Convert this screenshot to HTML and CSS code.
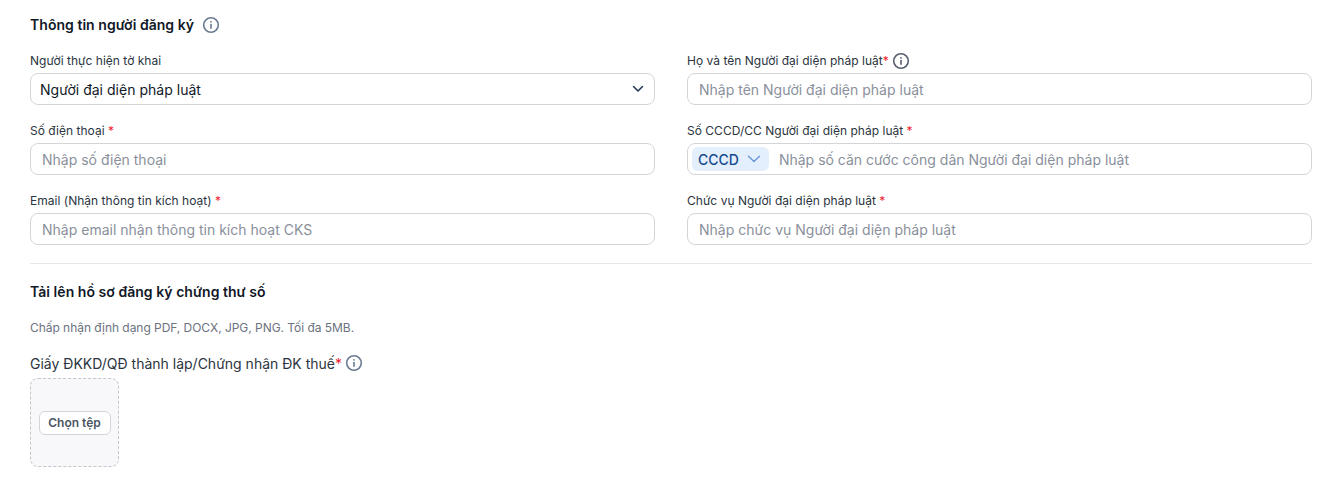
FILE: index.html
```html
<!DOCTYPE html>
<html lang="vi">
<head>
<meta charset="utf-8">
<title>Thông tin người đăng ký</title>
<link rel="stylesheet" href="styles.css">
</head>
<body>
<svg class="sprite" width="0" height="0" aria-hidden="true">
  <symbol id="info" viewBox="0 0 18 18">
    <circle cx="9" cy="9" r="7.3" fill="none" stroke="currentColor" stroke-width="1.6"/>
    <path d="M9 8.500v3.700" fill="none" stroke="currentColor" stroke-width="1.6" stroke-linecap="round"/>
    <circle cx="9" cy="5.800" r=".9" fill="currentColor"/>
  </symbol>
</svg>
<main class="page">
  <div class="section-title">
    <h2 class="heading">Thông tin người đăng ký</h2>
    <svg class="info info-title"><use href="#info"/></svg>
  </div>
  <div class="grid">
    <div class="field">
      <div class="label">Người thực hiện tờ khai</div>
      <div class="control select">
        <span class="value">Người đại diện pháp luật</span>
        <svg class="chevron" viewBox="0 0 12 8"><path d="M1.500 1.500L6 6l4.500-4.500" fill="none" stroke="currentColor" stroke-width="1.500" stroke-linecap="round" stroke-linejoin="round"/></svg>
      </div>
    </div>
    <div class="field">
      <div class="label">Họ và tên Người đại diện pháp luật<span class="req">*</span><svg class="info info-label"><use href="#info"/></svg></div>
      <div class="control"><span class="placeholder">Nhập tên Người đại diện pháp luật</span></div>
    </div>
    <div class="field">
      <div class="label">Số điện thoại <span class="req">*</span></div>
      <div class="control"><span class="placeholder">Nhập số điện thoại</span></div>
    </div>
    <div class="field">
      <div class="label">Số CCCD/CC Người đại diện pháp luật <span class="req">*</span></div>
      <div class="control control-tag">
        <span class="tag">CCCD<svg class="tag-chevron" viewBox="0 0 14 8"><path d="M1.500 1.200L7 6.500l5.500-5.300" fill="none" stroke="currentColor" stroke-width="1.500" stroke-linecap="round" stroke-linejoin="round"/></svg></span>
        <span class="placeholder">Nhập số căn cước công dân Người đại diện pháp luật</span>
      </div>
    </div>
    <div class="field">
      <div class="label">Email (Nhận thông tin kích hoạt) <span class="req">*</span></div>
      <div class="control"><span class="placeholder">Nhập email nhận thông tin kích hoạt CKS</span></div>
    </div>
    <div class="field">
      <div class="label">Chức vụ Người đại diện pháp luật <span class="req">*</span></div>
      <div class="control"><span class="placeholder">Nhập chức vụ Người đại diện pháp luật</span></div>
    </div>
  </div>
  <hr class="divider">
  <h2 class="heading upload-title">Tải lên hồ sơ đăng ký chứng thư số</h2>
  <p class="hint">Chấp nhận định dạng PDF, DOCX, JPG, PNG. Tối đa 5MB.</p>
  <div class="upload-label">Giấy ĐKKD/QĐ thành lập/Chứng nhận ĐK thuế<span class="req">*</span><svg class="info info-upload"><use href="#info"/></svg></div>
  <div class="dropzone"><button class="file-btn" type="button">Chọn tệp</button></div>
</main>
</body>
</html>
```

FILE: styles.css
```css
* { box-sizing: border-box; }
html, body { margin: 0; background: #fff; }
body { font-family: Inter, "Liberation Sans", sans-serif; color: #1f2937; }
.sprite { position: absolute; }
.page { padding: 15px 15px 0 30px; }
.section-title { display: flex; align-items: center; height: 20px; margin-bottom: 16px; }
.heading { margin: 0; font-size: 14px; line-height: 20px; font-weight: 600; letter-spacing: .04px; color: #111827; }
.info { color: #6b7c93; flex: none; }
.info-title { width: 18px; height: 18px; margin-left: 8px; }
.grid { display: grid; grid-template-columns: 625px 625px; column-gap: 32px; row-gap: 16px; }
.label { display: flex; align-items: center; height: 20px; margin-bottom: 2px; font-size: 12px; line-height: 20px; letter-spacing: .02px; color: #2b3440; white-space: pre-wrap; }
.req { color: #ef1c2e; }
.info-label { width: 18px; height: 18px; margin-left: 3px; color: #566070; }
.control { display: flex; align-items: center; height: 32px; padding: 0 11px; border: 1px solid #d4d5db; border-radius: 8px; background: #fff; font-size: 14px; }
.select { justify-content: space-between; padding: 0 10px 0 9px; }
.value { color: #111827; font-size: 14px; letter-spacing: .02px; }
.chevron { width: 12px; height: 8px; color: #1f3550; }
.placeholder { color: #8a909b; letter-spacing: .005px; }
.control-tag { padding: 0 4px; }
.tag { display: inline-flex; align-items: center; height: 24px; padding: 0 8px 0 6px; border-radius: 6px; background: #e4effd; color: #17498f; font-weight: 500; margin-right: 10px; }
.tag-chevron { width: 14px; height: 8px; margin-left: 8px; color: #6c9ad6; }
.divider { height: 1px; margin: 18px 0 0; border: 0; background: #e5e7eb; }
.upload-title { margin-top: 18px; }
.hint { margin: 16px 0 0; font-size: 12px; line-height: 20px; letter-spacing: -.04px; color: #6b7280; }
.upload-label { display: flex; align-items: center; height: 20px; margin-top: 15px; margin-bottom: 5px; font-size: 14px; color: #2b3440; }
.info-upload { width: 18px; height: 18px; margin-left: 3px; }
.dropzone { display: flex; align-items: center; justify-content: center; width: 89px; height: 89px; border: 1px dashed #c4c6cc; border-radius: 8px; background: #f8f8fa; }
.file-btn { height: 24px; width: 72px; padding: 0; border: 1px solid #d4d5db; border-radius: 6px; background: #fff; font: 600 12px Inter, sans-serif; color: #4b5563; }
```
